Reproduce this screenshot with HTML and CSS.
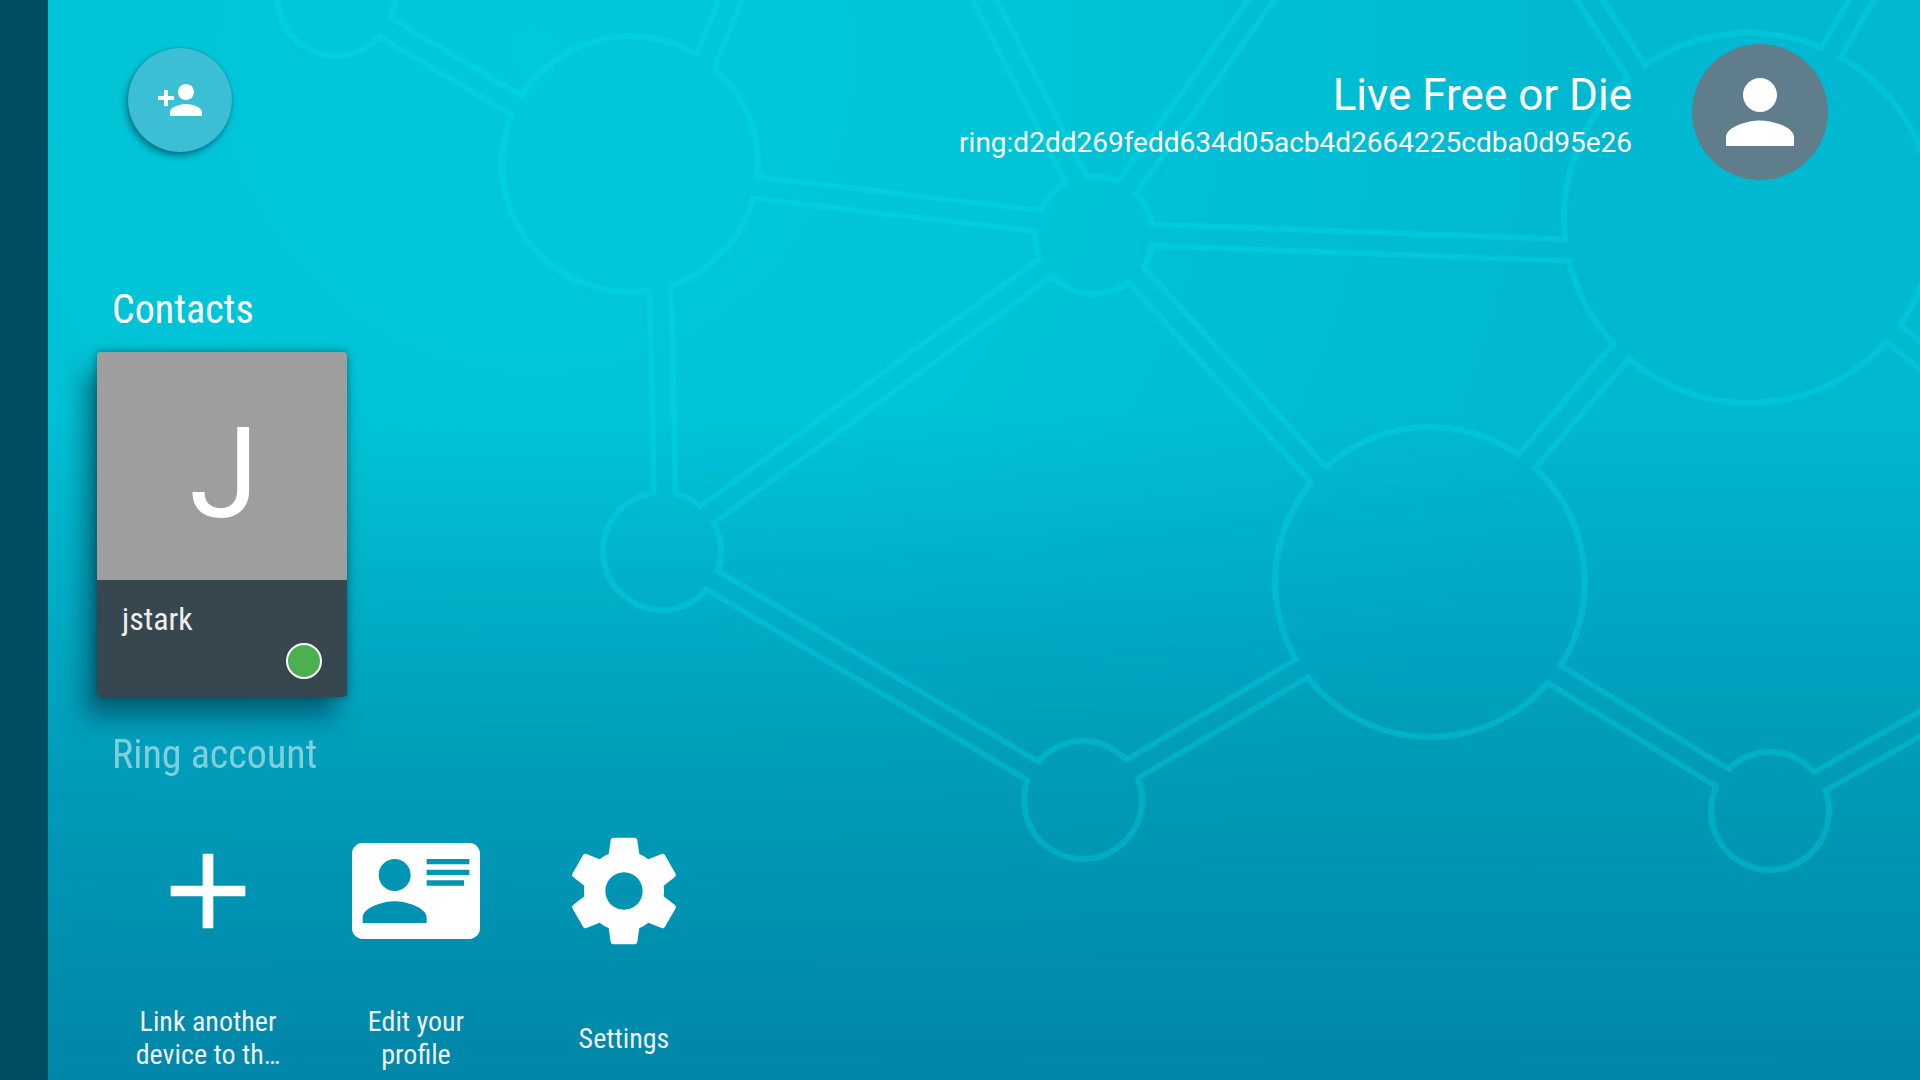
FILE: index.html
```html
<!DOCTYPE html>
<html lang="en">
<head>
<meta charset="utf-8">
<meta name="viewport" content="width=device-width, initial-scale=1">
<title>Ring</title>
<link rel="stylesheet" href="styles.css">
</head>
<body>
<svg class="network" viewBox="0 0 1920 1080" preserveAspectRatio="xMidYMin slice" aria-hidden="true">
  <defs>
    <g id="links">
      <path d="M336-2 600 155M677 130 751-50M640 174 1090 227M959-50 1102 230M1297-50 1093 235M1100 233 1700 255M1090 235 660 549M1100 235 1400 564M1700 260 1450 550M1557-50 1688 150M1890-50 1775 150M1840 288 1980 406M670 555 1075 796M1085 797 1400 610M1450 610 1765 804M1775 807 1960 701M658 164 666 551"/>
    </g>
    <mask id="outline" maskUnits="userSpaceOnUse" x="0" y="0" width="1920" height="1080">
      <use href="#links" stroke="#fff" stroke-width="27"/>
      <g fill="#fff">
        <circle cx="336" cy="-3" r="62"/><circle cx="630" cy="164" r="131"/><circle cx="1094" cy="235" r="62"/><circle cx="1749" cy="218" r="188"/>
        <circle cx="662" cy="551" r="62"/><circle cx="1083" cy="800" r="62"/><circle cx="1430" cy="582" r="158"/><circle cx="1770" cy="811" r="62"/>
      </g>
      <use href="#links" stroke="#000" stroke-width="16"/>
      <g fill="#000">
        <circle cx="336" cy="-3" r="56"/><circle cx="630" cy="164" r="125"/><circle cx="1094" cy="235" r="56"/><circle cx="1749" cy="218" r="182"/>
        <circle cx="662" cy="551" r="56"/><circle cx="1083" cy="800" r="56"/><circle cx="1430" cy="582" r="152"/><circle cx="1770" cy="811" r="56"/>
      </g>
    </mask>
  </defs>
  <rect class="network-line" width="1920" height="1080" mask="url(#outline)"/>
</svg>
<div class="screen">
  <aside class="rail"></aside>
  <main class="content">
    <header class="top">
      <button class="add" type="button" aria-label="Add contact">
        <svg class="add-icon" viewBox="0 0 24 24"><path d="M15 12c2.21 0 4-1.79 4-4s-1.79-4-4-4-4 1.79-4 4 1.79 4 4 4zm-9-2V7H4v3H1v2h3v3h2v-3h3v-2H6zm9 4c-2.67 0-8 1.34-8 4v2h16v-2c0-2.66-5.33-4-8-4z"/></svg>
      </button>
      <div class="account">
        <div class="account-text">
          <h1 class="account-name">Live Free or Die</h1>
          <p class="account-id">ring:d2dd269fedd634d05acb4d2664225cdba0d95e26</p>
        </div>
        <div class="avatar">
          <svg class="avatar-icon" viewBox="0 0 24 24"><path d="M12 12c2.21 0 4-1.79 4-4s-1.79-4-4-4-4 1.79-4 4 1.79 4 4 4zm0 2c-2.67 0-8 1.34-8 4v2h16v-2c0-2.66-5.33-4-8-4z"/></svg>
        </div>
      </div>
    </header>

    <section class="row">
      <h2 class="row-title">Contacts</h2>
      <button class="card" type="button">
        <span class="card-picture">J</span>
        <span class="card-info">
          <span class="card-name">jstark</span>
          <span class="presence"></span>
        </span>
      </button>
    </section>

    <section class="row row-account">
      <h2 class="row-title row-title-dim">Ring account</h2>
      <div class="actions">
        <button class="action" type="button">
          <svg class="action-icon" viewBox="0 0 24 24"><path d="M19 13h-6v6h-2v-6H5v-2h6V5h2v6h6v2z"/></svg>
          <span class="action-label">Link another<br>device to th…</span>
        </button>
        <button class="action" type="button">
          <svg class="action-icon" viewBox="0 0 24 24"><path fill-rule="evenodd" d="M22 3H2C.9 3 0 3.9 0 5v14c0 1.1.9 2 2 2h20c1.1 0 2-.9 2-2V5c0-1.1-.9-2-2-2zM8 6c1.66 0 3 1.34 3 3s-1.34 3-3 3-3-1.34-3-3 1.34-3 3-3zm6 12H2v-1c0-2 4-3.1 6-3.1s6 1.1 6 3.1v1zm0-12h8v1h-8zm0 2h8v1h-8zm0 2h7v1h-7z"/></svg>
          <span class="action-label">Edit your<br>profile</span>
        </button>
        <button class="action" type="button">
          <svg class="action-icon" viewBox="0 0 24 24"><path d="M19.43 12.98c.04-.32.07-.64.07-.98s-.03-.66-.07-.98l2.11-1.65c.19-.15.24-.42.12-.64l-2-3.46c-.12-.22-.39-.3-.61-.22l-2.49 1c-.52-.4-1.08-.73-1.69-.98l-.38-2.65C14.46 2.18 14.25 2 14 2h-4c-.25 0-.46.18-.49.42l-.38 2.65c-.61.25-1.17.59-1.69.98l-2.49-1c-.23-.09-.49 0-.61.22l-2 3.46c-.13.22-.07.49.12.64l2.11 1.65c-.04.32-.07.65-.07.98s.03.66.07.98l-2.11 1.65c-.19.15-.24.42-.12.64l2 3.46c.12.22.39.3.61.22l2.49-1c.52.4 1.08.73 1.69.98l.38 2.65c.03.24.24.42.49.42h4c.25 0 .46-.18.49-.42l.38-2.65c.61-.25 1.17-.59 1.69-.98l2.49 1c.23.09.49 0 .61-.22l2-3.46c.12-.22.07-.49-.12-.64l-2.11-1.65zM12 15.5c-1.93 0-3.5-1.57-3.5-3.5s1.57-3.5 3.5-3.5 3.5 1.57 3.5 3.5-1.57 3.5-3.5 3.5z"/></svg>
          <span class="action-label">Settings</span>
        </button>
      </div>
    </section>
  </main>
</div>
</body>
</html>
```
FILE: styles.css
```css
* { box-sizing: border-box; }

body {
  margin: 0;
  min-height: 100vh;
  position: relative;
  overflow-x: hidden;
  font-family: Roboto, "Liberation Sans", sans-serif;
  color: #fff;
  background:
    linear-gradient(to bottom, rgba(0, 136, 170, 0) 38%, rgba(0, 136, 170, .55) 67%, rgba(0, 134, 168, 1) 100%),
    radial-gradient(circle at 28% 5%, #00c9dc 0, #00c3d6 500px, #00b8d0 1080px);
}

button {
  border: 0;
  padding: 0;
  margin: 0;
  background: none;
  color: inherit;
  font: inherit;
}

svg { display: block; }

/* Decorative backdrop of connected nodes */
.network {
  position: absolute;
  inset: 0;
  width: 100%;
  height: 100%;
  fill: none;
}

.network-line { fill: rgba(0, 232, 240, .27); }

.screen {
  position: relative;
  display: flex;
  min-height: 100vh;
}

.rail {
  flex: 0 0 48px;
  background: #004d61;
}

.content {
  flex: 1;
  min-width: 0;
  overflow: hidden;
}

.top {
  display: flex;
  justify-content: space-between;
  align-items: flex-start;
  padding: 44px 92px 0 80px;
}

.add {
  display: grid;
  place-items: center;
  width: 104px;
  height: 104px;
  margin-top: 4px;
  border-radius: 50%;
  background: #3cbfd5;
  box-shadow: -2px 4px 6px rgba(0, 50, 70, .5), 0 0 2px rgba(0, 50, 70, .4);
}

.add-icon { width: 48px; height: 48px; fill: #fff; }

.account {
  display: flex;
  align-items: center;
  gap: 60px;
}

.account-text {
  padding-top: 10px;
  text-align: right;
}

.account-name {
  margin: 0;
  font-size: 44px;
  line-height: 52px;
  font-weight: 400;
}

.account-id {
  margin: 0;
  font-size: 28px;
  line-height: 44px;
}

.avatar {
  display: grid;
  place-items: center;
  width: 136px;
  height: 136px;
  border-radius: 50%;
  background: #607d8b;
}

.avatar-icon { width: 102px; height: 102px; fill: #fff; }

.row { padding: 106px 0 0 49px; }
.row-account { padding-top: 34px; }

.row-title {
  margin: 0 0 18px 15px;
  font-family: "Roboto Condensed", "Liberation Sans Narrow", Roboto, sans-serif;
  font-size: 40px;
  line-height: 48px;
  font-weight: 400;
}

.row-title-dim { opacity: .5; }

.card {
  display: block;
  width: 250px;
  border-radius: 4px;
  overflow: hidden;
  text-align: left;
  box-shadow: -12px 20px 24px rgba(0, 40, 55, .5), 0 0 8px rgba(0, 40, 55, .5);
}

.card-picture {
  display: grid;
  place-items: center;
  height: 228px;
  padding: 16px 0 0 4px;
  background: #9e9e9e;
  font-size: 126px;
  line-height: 148px;
}

.card-info {
  display: flex;
  flex-direction: column;
  height: 117px;
  padding: 20px 25px 18px;
  background: #37474f;
}

.card-name {
  font-family: "Roboto Condensed", "Liberation Sans Narrow", Roboto, sans-serif;
  font-size: 32px;
  line-height: 38px;
  color: #eee;
}

.presence {
  width: 36px;
  height: 36px;
  margin: auto 0 0 auto;
  border: 2px solid #fff;
  border-radius: 50%;
  background: #4caf50;
}

.actions {
  display: flex;
  margin: 48px 0 0 7px;
}

.action {
  display: flex;
  flex-direction: column;
  align-items: center;
  width: 208px;
}

.action-icon { width: 128px; height: 128px; fill: #fff; }

.action-label {
  display: grid;
  align-content: center;
  height: 66px;
  margin-top: 50px;
  font-family: "Roboto Condensed", "Liberation Sans Narrow", Roboto, sans-serif;
  font-size: 28px;
  line-height: 33px;
  color: #eee;
}
```
